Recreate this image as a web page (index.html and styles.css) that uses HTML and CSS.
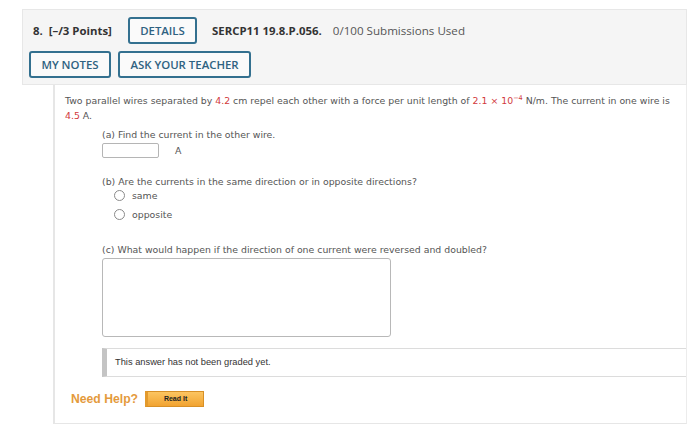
FILE: index.html
```html
<!DOCTYPE html>
<html>
<head>
<meta charset="utf-8">
<link rel="stylesheet" href="styles.css">
</head>
<body>
<div class="wrap">
  <div class="header">
    <div class="row1">
      <span class="points">8.&nbsp; [–/3 Points]</span>
      <span class="btn btn-details">DETAILS</span>
      <span class="code">SERCP11 19.8.P.056.</span>
      <span class="subs">0/100 Submissions Used</span>
    </div>
    <div class="row2">
      <span class="btn btn-notes">MY NOTES</span>
      <span class="btn btn-ask">ASK YOUR TEACHER</span>
    </div>
  </div>
  <div class="content">
    <p class="question">Two parallel wires separated by <span class="red">4.2</span> cm repel each other with a force per unit length of <span class="red">2.1 × 10<sup>−4</sup></span> N/m. The current in one wire is <span class="red">4.5</span> A.</p>
    <div class="part">
      <div class="label">(a) Find the current in the other wire.</div>
      <div class="answer-row"><span class="input"></span><span class="unit">A</span></div>
    </div>
    <div class="part part-b">
      <div class="label">(b) Are the currents in the same direction or in opposite directions?</div>
      <div class="radio-row"><span class="radio"></span><span>same</span></div>
      <div class="radio-row second"><span class="radio"></span><span>opposite</span></div>
    </div>
    <div class="part part-c">
      <div class="label">(c) What would happen if the direction of one current were reversed and doubled?</div>
      <div class="textarea"></div>
    </div>
    <div class="graded">This answer has not been graded yet.</div>
    <div class="help">
      <span class="need">Need Help?</span>
      <span class="readit">Read It</span>
    </div>
  </div>
</div>
</body>
</html>
```
FILE: styles.css
```css
html, body {
  margin: 0;
  padding: 0;
  background: #ffffff;
}
.wrap {
  padding: 9px 13px 0 22px;
  width: 665px;
}
.header {
  background: #f5f5f5;
  border: 1px solid #e7e7e7;
  padding: 7px 6px 6px 6px;
  font-family: "Open Sans", sans-serif;
  font-size: 11.4px;
}
.row1 {
  display: flex;
  align-items: center;
  height: 27px;
}
.row2 {
  display: flex;
  align-items: center;
  gap: 7px;
  margin-top: 7px;
  height: 27px;
}
.points {
  font-weight: 700;
  color: #333;
  margin-left: 4px;
  width: 95px;
}
.btn {
  box-sizing: border-box;
  height: 27px;
  display: inline-flex;
  align-items: center;
  justify-content: center;
  border: 2px solid #33708f;
  border-radius: 3px;
  background: #fafafa;
  color: #2f6281;
  font-weight: 600;
  font-size: 11.4px;
}
.btn-details { width: 69px; }
.btn-notes { width: 82px; }
.btn-ask { width: 133px; }
.code {
  font-weight: 700;
  color: #333;
  margin-left: 15px;
}
.subs {
  color: #555;
  margin-left: 11px;
  font-size: 11.6px;
}
.content {
  margin-left: 31px;
  border-left: 2px solid #e6e6e6;
  border-right: 1px solid #ececec;
  border-bottom: 1px solid #e6e6e6;
  padding: 8px 0 0 10px;
  height: 330px;
  font-family: "DejaVu Sans", Verdana, sans-serif;
  font-size: 9.35px;
  color: #555;
}
.question {
  margin: 0;
  line-height: 15px;
  padding-right: 4px;
}
.red { color: #d2393c; }
sup {
  font-size: 6.5px;
  line-height: 1;
  vertical-align: 4px;
}
.part {
  margin-left: 37px;
}
.label {
  line-height: 13px;
  margin-top: 4.5px;
}
.answer-row {
  display: flex;
  align-items: center;
  margin-top: 2.5px;
  height: 15px;
}
.input {
  box-sizing: border-box;
  width: 57px;
  height: 15px;
  border: 1px solid #b5b5b5;
  border-radius: 2px;
  background: #fff;
}
.unit {
  margin-left: 16px;
}
.part-b .label {
  margin-top: 16.5px;
}
.radio-row {
  display: flex;
  align-items: center;
  height: 15px;
  margin-left: 12px;
  gap: 7px;
}
.radio-row.second { margin-top: 4px; }
.radio {
  box-sizing: border-box;
  width: 11px;
  height: 11px;
  border: 1px solid #8a8a8a;
  border-radius: 50%;
  background: #fff;
}
.part-c .label {
  margin-top: 21px;
}
.textarea {
  box-sizing: border-box;
  width: 289px;
  height: 79px;
  margin-top: 2px;
  border: 1px solid #b8b8b8;
  border-radius: 3px;
  background: #fff;
}
.graded {
  box-sizing: border-box;
  margin: 11px 0 0 37px;
  height: 29px;
  border-top: 1px solid #dcdcdc;
  border-bottom: 1px solid #dcdcdc;
  border-left: 5px solid #c4c4c4;
  padding-left: 8px;
  display: flex;
  align-items: center;
  font-family: "Liberation Sans", Arial, sans-serif;
  font-size: 9.3px;
  color: #333;
}
.help {
  display: flex;
  align-items: center;
  margin: 14px 0 0 6px;
  height: 16px;
}
.need {
  font-family: "Liberation Sans", Arial, sans-serif;
  font-weight: 700;
  font-size: 12.2px;
  color: #e49a3c;
}
.readit {
  box-sizing: border-box;
  margin-left: 7px;
  width: 59px;
  height: 16px;
  display: inline-flex;
  align-items: center;
  justify-content: center;
  background: linear-gradient(#fcc561, #f1a331);
  border: 1px solid #d89026;
  border-left: 3px solid #e39a2d;
  font-family: "Liberation Sans", Arial, sans-serif;
  font-weight: 700;
  font-size: 7px;
  color: #222;
}
```
